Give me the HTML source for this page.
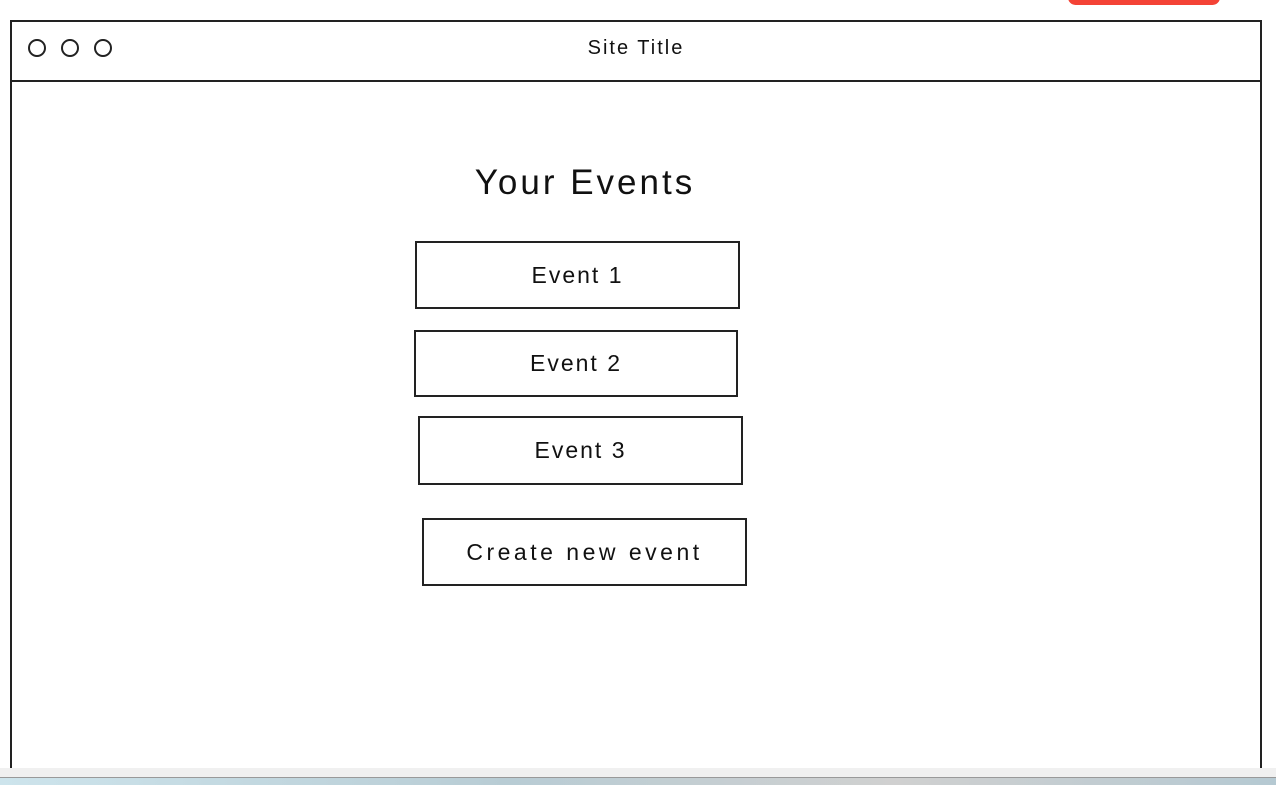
<!DOCTYPE html>
<html><head><style>
body{margin:0;width:1276px;height:784px;background:#fff;position:relative;overflow:hidden;font-family:"Liberation Sans",sans-serif;color:#111}
.a{position:absolute}
.box{position:absolute;border:2px solid #222;box-sizing:border-box;display:flex;align-items:center;justify-content:center;font-size:23px;letter-spacing:2px}
.c{position:absolute;width:18px;height:18px;border:2.5px solid #222;border-radius:50%;box-sizing:border-box;top:39px}
</style></head><body>
<div class="a" style="left:1068px;top:-10px;width:152px;height:15px;background:#f44336;border-radius:8px"></div>
<div class="a" style="left:10px;top:20px;width:1252px;height:760px;border:2px solid #222;border-bottom:none;box-sizing:border-box"></div>
<div class="a" style="left:10px;top:80px;width:1252px;height:2px;background:#222"></div>
<div class="c" style="left:28px"></div><div class="c" style="left:61px"></div><div class="c" style="left:94px"></div>
<div class="a" style="left:0;width:1272px;top:37px;text-align:center;font-size:20px;letter-spacing:2px">Site Title</div>
<div class="a" style="left:0;width:1170px;top:163px;text-align:center;font-size:35px;letter-spacing:3px">Your Events</div>
<div class="box" style="left:415px;top:241px;width:325px;height:68px">Event 1</div>
<div class="box" style="left:414px;top:330px;width:324px;height:67px">Event 2</div>
<div class="box" style="left:418px;top:416px;width:325px;height:69px">Event 3</div>
<div class="box" style="left:422px;top:518px;width:325px;height:68px;letter-spacing:3.5px">Create new event</div>
<div class="a" style="left:0;top:768px;width:1276px;height:9px;background:#f0f0f0"></div>
<div class="a" style="left:0;top:777px;width:1276px;height:7px;background:linear-gradient(90deg,#cde4ec,#b8ccd4 40%,#d0d0d0 70%,#b5c9d2);border-top:1px solid #999"></div>
</body></html>
